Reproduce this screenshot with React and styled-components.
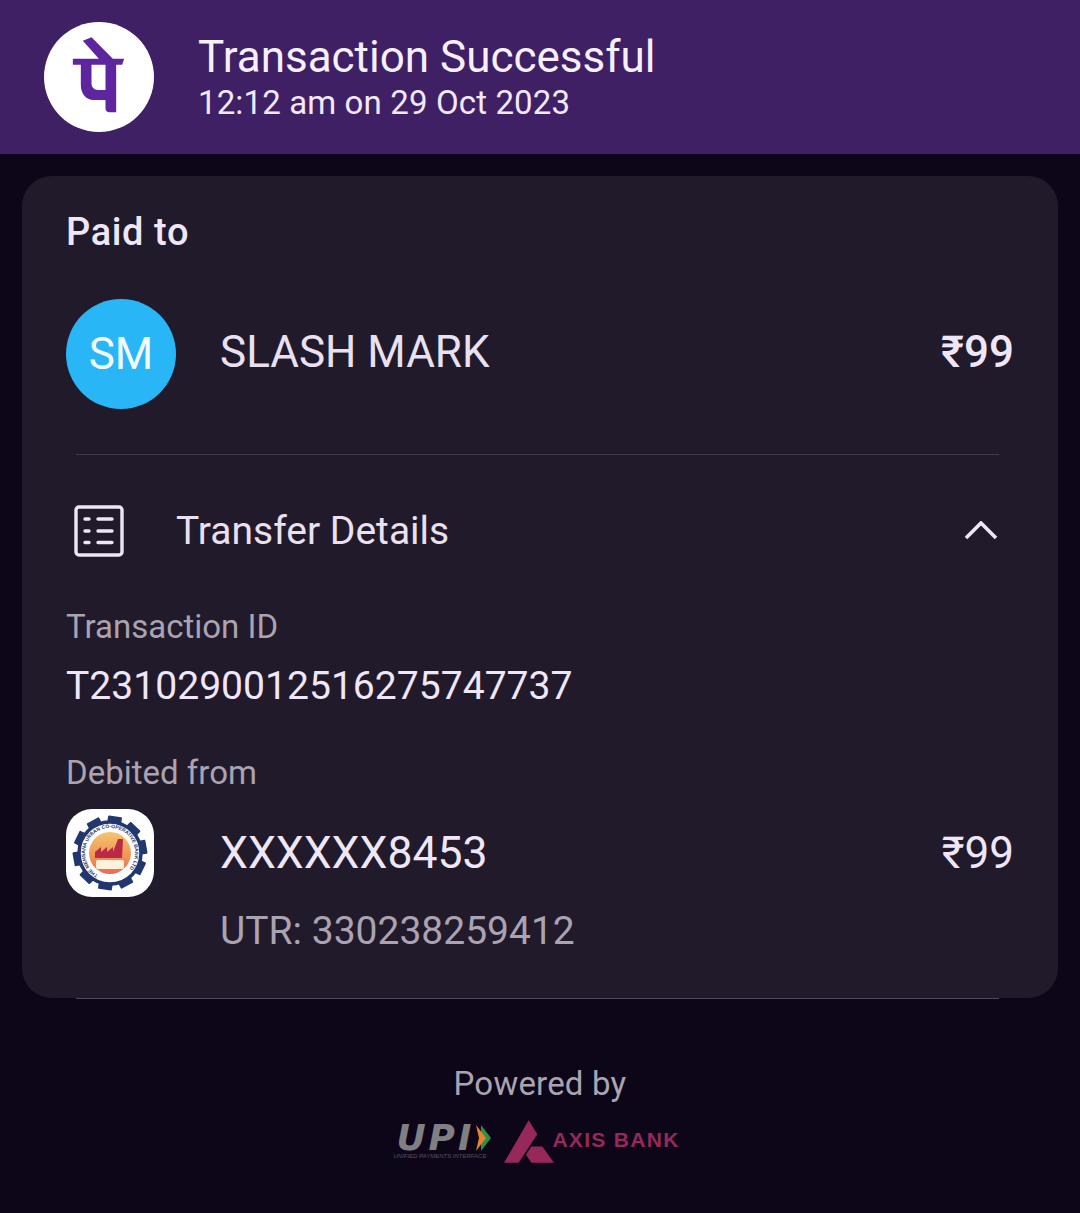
import styled, { createGlobalStyle } from "styled-components";

const GlobalStyle = createGlobalStyle`
  html, body {
    margin: 0;
    padding: 0;
    background: #0d0618;
  }
  * { box-sizing: border-box; }
`;

const Page = styled.div`
  width: 1080px;
  height: 1213px;
  background: #0d0618;
  color: #f1e9f9;
  font-family: Roboto, "Noto Sans", sans-serif;
  overflow: hidden;
`;

const Header = styled.header`
  height: 154px;
  background: #402065;
  padding: 22px 0 0 44px;
  display: flex;
  align-items: flex-start;
  gap: 44px;
`;

const LogoCircle = styled.div`
  width: 110px;
  height: 110px;
  border-radius: 50%;
  background: #fff;
  display: flex;
  align-items: center;
  justify-content: center;
`;

const HeaderText = styled.div`
  display: flex;
  flex-direction: column;
  padding-top: 9px;
`;

const Title = styled.div`
  font-size: 44px;
  line-height: 52px;
  color: #f6f0fb;
`;

const Subtitle = styled.div`
  font-size: 33px;
  line-height: 40px;
  letter-spacing: 0.13px;
  color: #f1e9f9;
`;

const Card = styled.section`
  margin: 22px 22px 0;
  height: 822px;
  background: #211a2b;
  border-radius: 30px;
  padding: 32px 44px 0;
`;

const PaidTo = styled.div`
  font-size: 38px;
  line-height: 48px;
  font-weight: 500;
  letter-spacing: 0.6px;
  color: #efe7f7;
`;

const Row = styled.div`
  display: flex;
  align-items: ${(p) => p.$align || "center"};
  margin-top: ${(p) => p.$top}px;
  padding: 0 ${(p) => p.$right || 0}px 0 ${(p) => p.$left || 0}px;
`;

const Avatar = styled.div`
  width: 110px;
  height: 110px;
  border-radius: 50%;
  background: #29b6f6;
  display: flex;
  align-items: center;
  justify-content: center;
  font-size: 44px;
  color: #f4fbff;
  margin-right: 44px;
`;

const Name = styled.div`
  flex: 1;
  font-size: 44px;
  color: #e9e1f1;
  padding-bottom: 4px;
`;

const Amount = styled.div`
  font-size: 44px;
  line-height: 52px;
  font-weight: ${(p) => p.$weight || 400};
  color: #efe7f7;
  margin-top: ${(p) => p.$top || 0}px;
  padding-bottom: ${(p) => p.$bottom || 0}px;
`;

const Divider = styled.div`
  height: 1px;
  background: ${(p) => p.$color || "#423b4c"};
  margin: ${(p) => p.$margin};
`;

const SectionTitle = styled.div`
  flex: 1;
  font-size: 39px;
  color: #e9e1f1;
  margin-left: 52px;
`;

const Label = styled.div`
  font-size: 33px;
  line-height: 40px;
  color: #aaa3b1;
  margin-top: ${(p) => p.$top}px;
`;

const TxnId = styled.div`
  font-size: 39.100px;
  line-height: 48px;
  color: #efe7f7;
  margin-top: 15px;
`;

const BankBadge = styled.div`
  width: 88px;
  height: 88px;
  border-radius: 26px;
  background: #fff;
  display: flex;
  align-items: center;
  justify-content: center;
  margin-right: 66px;
`;

const BankInfo = styled.div`
  flex: 1;
  display: flex;
  flex-direction: column;
  padding-top: 18px;
`;

const Account = styled.div`
  font-size: 44.500px;
  line-height: 52px;
  color: #efe7f7;
`;

const Utr = styled.div`
  font-size: 39px;
  line-height: 46px;
  color: #aaa3b1;
  margin-top: 29px;
`;

const Footer = styled.footer`
  display: flex;
  flex-direction: column;
  align-items: center;
  padding-top: 65px;
`;

const Powered = styled.div`
  font-size: 33px;
  line-height: 40px;
  letter-spacing: 0.2px;
  color: #aaa3b1;
`;

const Brands = styled.div`
  display: flex;
  align-items: flex-start;
  margin: 16px 7px 0 0;
`;

const UpiMark = styled.div`
  width: 111px;
  display: flex;
  flex-direction: column;
  padding-top: 4px;
`;

const UpiTop = styled.div`
  display: flex;
  align-items: center;
  height: 27px;
  padding-left: 3px;
`;

const UpiText = styled.span`
  font-family: "DejaVu Sans", sans-serif;
  font-size: 36px;
  line-height: 27px;
  font-weight: 700;
  font-style: italic;
  letter-spacing: 3px;
  color: #808084;
  margin-right: 1px;
`;

const UpiSmall = styled.span`
  font-family: "Liberation Sans", sans-serif;
  font-size: 6px;
  line-height: 7px;
  margin-top: 2px;
  font-style: italic;
  color: #55525c;
  white-space: nowrap;
`;

const AxisText = styled.span`
  font-family: "Liberation Sans", sans-serif;
  font-size: 21px;
  line-height: 24px;
  font-weight: 700;
  letter-spacing: 1.300px;
  color: #97285a;
  margin: 8px 0 0 -2px;
`;

function PhonePeMark() {
  return (
    <svg width="65" height="90" viewBox="4.500 6 195 270" fill="#5f259f">
      <path
        fillRule="evenodd"
        d="M52 32L78 22l64 64h34l-6 18h-18v143h-22q-10-2-10-12v-25H85c-25 0-39-20-39-45v-61H22V86h78z M78 104v56c0 12 7 20 20 20h22v-76z"
      />
    </svg>
  );
}

function ListIcon() {
  return (
    <svg width="50" height="52" viewBox="0 0 50 52" fill="none" stroke="#efe5f7" strokeWidth="3.400" strokeLinecap="round">
      <rect x="2" y="2" width="46" height="48" rx="3" />
      <path d="M11 14h4M11 26h4M11 37.500h4M24 14h14M24 26h14M24 37.500h14" />
    </svg>
  );
}

function ChevronUp() {
  return (
    <svg width="34" height="20" viewBox="0 0 34 20" fill="none" stroke="#efe5f7" strokeWidth="3.600">
      <path d="M2 17L17 2l15 15" />
    </svg>
  );
}

function BankSeal() {
  const teeth = Array.from({ length: 10 }, (_, i) => i * 36 + 8);
  return (
    <svg width="84" height="84" viewBox="0 0 84 84">
      <defs>
        <linearGradient id="sealFill" x1="0" y1="0" x2="0" y2="1">
          <stop offset="0" stopColor="#f6c46f" />
          <stop offset="0.650" stopColor="#ee8f55" />
          <stop offset="1" stopColor="#e9695a" />
        </linearGradient>
        <path id="sealArc" d="M42 67a25 25 0 1 1 0.100 0" />
      </defs>
      {teeth.map((a) => (
        <rect key={a} x="35" y="5" width="14" height="7" rx="1" fill="#22376e" transform={`rotate(${a} 42 42)`} />
      ))}
      <circle cx="42" cy="42" r="31" fill="none" stroke="#22376e" strokeWidth="3.500" />
      <text fontFamily="Liberation Sans, sans-serif" fontSize="5" fontWeight="700" fill="#22376e">
        <textPath href="#sealArc" startOffset="8%">THE MEHSANA URBAN CO-OPERATIVE BANK LTD</textPath>
      </text>
      <circle cx="42" cy="42" r="21" fill="url(#sealFill)" />
      <path d="M27 47v-6l6-5v5l6-5v5l6-5v5l5-13h5l-1 19z" fill="#bb2a45" />
      <rect x="28" y="49" width="28" height="9" rx="2" fill="#fff2dc" />
    </svg>
  );
}

function UpiArrow() {
  return (
    <svg width="16" height="26" viewBox="0 0 16 26">
      <path d="M6 0l10 13L6 26z" fill="#2f8f46" />
      <path d="M1 0l10 13L1 26l3-13z" fill="#e9822d" />
    </svg>
  );
}

function AxisArrow() {
  return (
    <svg width="50" height="43" viewBox="18 18 150 128" fill="#97285a">
      <path d="M92 18l26 42-56 86H18z" />
      <path d="M100 97h33l35 49H100l-16-24z" />
    </svg>
  );
}

export default function App() {
  return (
    <Page>
      <GlobalStyle />
      <Header>
        <LogoCircle>
          <PhonePeMark />
        </LogoCircle>
        <HeaderText>
          <Title>Transaction Successful</Title>
          <Subtitle>12:12 am on 29 Oct 2023</Subtitle>
        </HeaderText>
      </Header>

      <Card>
        <PaidTo>Paid to</PaidTo>
        <Row $top={43}>
          <Avatar>SM</Avatar>
          <Name>SLASH MARK</Name>
          <Amount $weight={500} $bottom={4}>₹99</Amount>
        </Row>
        <Divider $margin="45px 15px 0 10px" />
        <Row $top={50} $left={8} $right={16}>
          <ListIcon />
          <SectionTitle>Transfer Details</SectionTitle>
          <ChevronUp />
        </Row>
        <Label $top={50}>Transaction ID</Label>
        <TxnId>T2310290012516275747737</TxnId>
        <Label $top={43}>Debited from</Label>
        <Row $align="flex-start" $top={16}>
          <BankBadge>
            <BankSeal />
          </BankBadge>
          <BankInfo>
            <Account>XXXXXX8453</Account>
            <Utr>UTR: 330238259412</Utr>
          </BankInfo>
          <Amount $top={18}>₹99</Amount>
        </Row>
      </Card>
      <Divider $color="#4f4858" $margin="0 81px 0 76px" />

      <Footer>
        <Powered>Powered by</Powered>
        <Brands>
          <UpiMark>
            <UpiTop>
              <UpiText>UPI</UpiText>
              <UpiArrow />
            </UpiTop>
            <UpiSmall>UNIFIED PAYMENTS INTERFACE</UpiSmall>
          </UpiMark>
          <AxisArrow />
          <AxisText>AXIS BANK</AxisText>
        </Brands>
      </Footer>
    </Page>
  );
}
